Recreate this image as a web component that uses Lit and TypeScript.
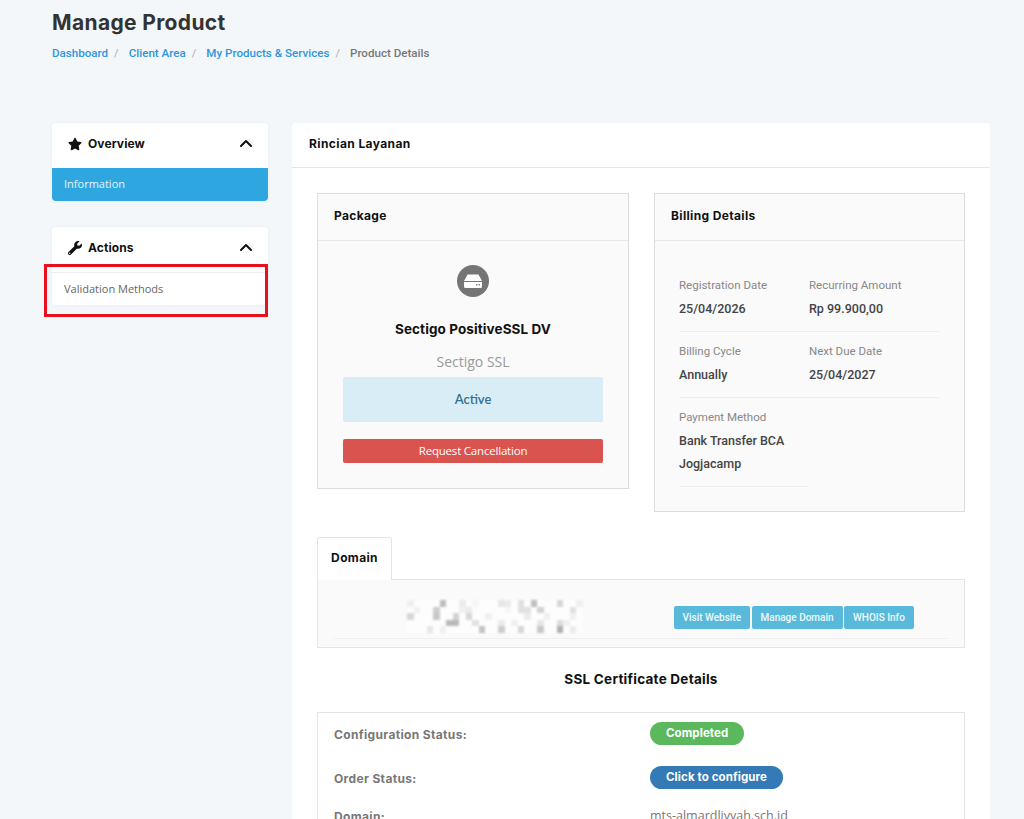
import { LitElement, html, css, svg } from 'lit';
import { customElement } from 'lit/decorators.js';

// blurred-out domain name: [row, col, gray] on a 27x5 tile grid
const MOSAIC: number[][] = [
  [0, 0, 240], [0, 5, 190], [0, 8, 235], [0, 10, 245], [0, 14, 230], [0, 15, 235], [0, 17, 225], [0, 19, 190], [0, 23, 215], [0, 26, 240],
  [1, 1, 240], [1, 4, 205], [1, 8, 240], [1, 9, 235], [1, 15, 245], [1, 17, 225], [1, 18, 225], [1, 20, 210], [1, 25, 225],
  [2, 0, 215], [2, 4, 200], [2, 7, 210], [2, 9, 215], [2, 12, 240], [2, 18, 235], [2, 21, 240], [2, 25, 240],
  [3, 6, 185], [3, 7, 185], [3, 10, 225], [3, 14, 235], [3, 16, 240], [3, 20, 230], [3, 23, 220], [3, 24, 240],
  [4, 3, 230], [4, 5, 240], [4, 11, 195], [4, 14, 205], [4, 17, 215], [4, 20, 200], [4, 23, 175], [4, 25, 235],
];

const chevron = svg`<polyline points="3,8 8,3 13,8" fill="none" stroke="#111" stroke-width="2" stroke-linecap="round" stroke-linejoin="round" />`;

@customElement('app-root')
export class AppRoot extends LitElement {
  static styles = css`
    :host {
      display: block;
      height: 819px;
      overflow: hidden;
      background: #f4f7fa;
      font-family: 'Roboto', sans-serif;
      color: #333;
    }

    .page {
      padding: 10px 34px 0 52px;
    }

    h1 {
      margin: 0;
      height: 26px;
      font: 700 21px/26px 'Inter', sans-serif;
      color: #333;
      letter-spacing: 0.35px;
    }

    .crumbs {
      display: flex;
      margin-top: 8.5px;
      height: 16px;
      font: 500 11.6px/16px 'Roboto', sans-serif;
      color: #777;
    }

    .crumbs a {
      color: #2f96dc;
    }

    .crumbs i {
      font-style: normal;
      color: #bbb;
      width: 20.6px;
      padding-left: 6px;
      box-sizing: border-box;
    }

    .cols {
      display: grid;
      grid-template-columns: 216px 698px;
      gap: 24px;
      margin-top: 62.5px;
    }

    .side {
      display: flex;
      flex-direction: column;
      gap: 26px;
    }

    .side-panel {
      position: relative;
      background: #fff;
      border-radius: 4px;
      box-shadow: 0 0 4px rgba(0, 0, 0, 0.04);
    }

    .side-head {
      display: flex;
      align-items: center;
      height: 42px;
      padding: 0 16px 3px;
      font: 700 12px/1 'Inter', sans-serif;
      color: #111;
    }

    .side-head svg.ico {
      width: 14px;
      height: 14px;
      margin-right: 6px;
      fill: #111;
    }

    .side-head span {
      flex: 1;
      letter-spacing: 0.1px;
    }

    .side-head svg.chev {
      width: 14px;
      height: 12px;
    }

    .side-item {
      height: 33px;
      padding-left: 12px;
      font: 400 11px/32px 'Open Sans', sans-serif;
      border-radius: 0 0 4px 4px;
    }

    .side-item.active {
      background: #2ea7e0;
      color: #e6f5fc;
    }

    .side-item.plain {
      color: #666;
      border-top: 1px solid #eee;
      height: 32px;
      line-height: 31px;
    }

    .marker {
      position: absolute;
      left: -8px;
      top: 37px;
      width: 224px;
      height: 53px;
      box-sizing: border-box;
      border: 3px solid #e8101c;
      pointer-events: none;
    }

    .main {
      background: #fff;
      border-radius: 4px 4px 0 0;
      height: 720px;
    }

    .main-head {
      height: 44px;
      padding-left: 17px;
      font: 700 12px/42px 'Inter', sans-serif;
      letter-spacing: 0.4px;
      color: #111;
      border-bottom: 1px solid #e6e6e6;
    }

    .main-body {
      padding: 25px 25px 0;
    }

    .boxes {
      display: grid;
      grid-template-columns: 312px 311px;
      gap: 25px;
      align-items: start;
    }

    .box {
      background: #fafafa;
      border: 1px solid #ddd;
      box-sizing: border-box;
    }

    .box-head {
      height: 46px;
      padding-left: 16px;
      font: 700 12px/44px 'Inter', sans-serif;
      letter-spacing: 0.35px;
      color: #111;
      border-bottom: 1px solid #e8e8e8;
    }

    .package {
      height: 296px;
      text-align: center;
    }

    .package .box-head {
      text-align: left;
    }

    .package .body {
      padding: 24px 25px 0;
    }

    .disc {
      display: block;
      margin: 0 auto;
      width: 32px;
      height: 32px;
    }

    .product {
      margin-top: 24px;
      font: 700 13.5px/17px 'Inter', sans-serif;
      letter-spacing: 0.1px;
      color: #111;
    }

    .group {
      margin-top: 15px;
      font: 400 14px/18px 'Open Sans', sans-serif;
      color: #999;
    }

    .status {
      margin-top: 6px;
      height: 45px;
      background: #d9edf7;
      border-radius: 2px;
      font: 600 13px/45px 'Lato', sans-serif;
      color: #31708f;
    }

    .cancel {
      margin-top: 17px;
      height: 24px;
      background: #d9534f;
      border-radius: 2px;
      font: 400 11.5px/24px 'Open Sans', sans-serif;
      letter-spacing: -0.2px;
      color: #fff;
    }

    .billing {
      height: 319px;
    }

    .billing .body {
      padding: 35px 24px 0;
    }

    .info {
      display: grid;
      grid-template-columns: 130px 130px;
    }

    .info div {
      height: 56px;
      margin-bottom: 10px;
      box-sizing: border-box;
      border-bottom: 1px solid #eee;
    }

    .info .tall {
      height: 79px;
    }

    .info small {
      display: block;
      font: 400 11.5px/18px 'Roboto', sans-serif;
      color: #888;
    }

    .info b {
      display: block;
      margin-top: 3px;
      font: 500 12.5px/23px 'Roboto', sans-serif;
      color: #444;
    }

    .tab {
      margin-top: 25px;
      width: 75px;
      height: 43px;
      box-sizing: border-box;
      margin-bottom: -1px;
      position: relative;
      background: #fff;
      border: 1px solid #e4e4e4;
      border-bottom: none;
      border-radius: 3px 3px 0 0;
      font: 700 12px/40px 'Inter', sans-serif;
      letter-spacing: 0.35px;
      color: #111;
      text-align: center;
    }

    .pane {
      height: 69px;
      box-sizing: border-box;
      padding: 0 16px;
      background: #fafafa;
      border: 1px solid #e4e4e4;
    }

    .pane-row {
      display: flex;
      align-items: flex-start;
      height: 58px;
      border-bottom: 1px solid #f0f0f0;
    }

    .mosaic {
      display: grid;
      grid-template-columns: repeat(27, 6.5px);
      grid-template-rows: repeat(5, 6.5px);
      margin: 20px 0 0 73px;
      background: #fdfdfd;
      filter: blur(0.8px);
    }

    .btns {
      display: flex;
      gap: 1.5px;
      margin: 26px 0 0 91px;
    }

    .btns span {
      height: 23px;
      padding: 0 9px;
      background: #58b9da;
      border-radius: 2px;
      font: 500 10px/23px 'Roboto', sans-serif;
      color: #eef9fc;
    }

    h2 {
      margin: 21px 0 0;
      height: 20px;
      font: 700 13.5px/20px 'Inter', sans-serif;
      letter-spacing: 0.25px;
      color: #111;
      text-align: center;
    }

    .ssl {
      margin-top: 23px;
      padding: 9px 16px 0;
      border: 1px solid #e4e4e4;
      display: grid;
      grid-template-columns: 316px 1fr;
      grid-template-rows: 44px 38px 40px;
    }

    .ssl .label {
      font: 700 12px/25px 'Inter', sans-serif;
      letter-spacing: 0.35px;
      color: #777;
    }

    .pill {
      display: block;
      width: fit-content;
      height: 23px;
      padding: 0 16px;
      border-radius: 12px;
      font: 700 11.5px/22px 'Inter', sans-serif;
      letter-spacing: 0.1px;
      color: #fff;
    }

    .pill.green {
      background: #5cb85c;
    }

    .pill.blue {
      background: #337ab7;
    }

    .ssl .val {
      font: 400 12.5px/24px 'Open Sans', sans-serif;
      color: #777;
    }
  `;

  render() {
    return html`
      <div class="page">
        <h1>Manage Product</h1>
        <div class="crumbs">
          <a>Dashboard</a><i>/</i><a>Client Area</a><i>/</i><a>My Products &amp; Services</a><i>/</i><span>Product Details</span>
        </div>
        <div class="cols">
          <div class="side">
            <div class="side-panel">
              <div class="side-head">
                <svg class="ico" viewBox="0 0 576 512"><path d="M259.3 17.8L194 150.2 47.9 171.5c-26.2 3.8-36.7 36.1-17.7 54.6l105.7 103-25 145.5c-4.5 26.3 23.2 46 46.4 33.7L288 439.6l130.7 68.7c23.2 12.2 50.9-7.4 46.4-33.7l-25-145.5 105.7-103c19-18.5 8.5-50.8-17.7-54.6L382 150.2 316.7 17.8c-11.7-23.6-45.6-23.9-57.4 0z" /></svg>
                <span>Overview</span>
                <svg class="chev" viewBox="0 0 14 12">${chevron}</svg>
              </div>
              <div class="side-item active">Information</div>
            </div>
            <div class="side-panel">
              <div class="side-head">
                <svg class="ico" viewBox="0 0 512 512"><path d="M507.73 109.1c-2.24-9.03-13.54-12.09-20.12-5.51l-74.36 74.36-67.88-11.31-11.31-67.88 74.36-74.36c6.62-6.62 3.43-17.9-5.66-20.16-47.38-11.74-99.55.91-136.58 37.93-39.64 39.64-50.55 97.1-34.05 147.2L18.74 402.76c-24.99 24.99-24.99 65.51 0 90.5 24.99 24.99 65.51 24.99 90.5 0l213.21-213.21c50.12 16.71 107.47 5.68 147.37-34.22 37.07-37.07 49.7-89.32 37.91-136.73zM64 472c-13.25 0-24-10.75-24-24 0-13.26 10.75-24 24-24s24 10.74 24 24c0 13.25-10.75 24-24 24z" /></svg>
                <span>Actions</span>
                <svg class="chev" viewBox="0 0 14 12">${chevron}</svg>
              </div>
              <div class="side-item plain">Validation Methods</div>
              <div class="marker"></div>
            </div>
          </div>
          <div class="main">
            <div class="main-head">Rincian Layanan</div>
            <div class="main-body">
              <div class="boxes">
                <div class="box package">
                  <div class="box-head">Package</div>
                  <div class="body">
                    <svg class="disc" viewBox="0 0 32 32">
                      <circle cx="16" cy="16" r="16" fill="#757575" />
                      <path d="M10.5 9.5h11l3.5 6.5v5.5a1.5 1.5 0 0 1-1.5 1.5h-15A1.5 1.5 0 0 1 7 21.500V16z" fill="#fff" />
                      <path d="M7 16.500h18" stroke="#757575" stroke-width="1" />
                      <rect x="19" y="19" width="1.500" height="1.500" fill="#888" />
                      <rect x="21.500" y="19" width="1.500" height="1.500" fill="#888" />
                    </svg>
                    <div class="product">Sectigo PositiveSSL DV</div>
                    <div class="group">Sectigo SSL</div>
                    <div class="status">Active</div>
                    <div class="cancel">Request Cancellation</div>
                  </div>
                </div>
                <div class="box billing">
                  <div class="box-head">Billing Details</div>
                  <div class="body">
                    <div class="info">
                      <div><small>Registration Date</small><b>25/04/2026</b></div>
                      <div><small>Recurring Amount</small><b>Rp 99.900,00</b></div>
                      <div><small>Billing Cycle</small><b>Annually</b></div>
                      <div><small>Next Due Date</small><b>25/04/2027</b></div>
                      <div class="tall"><small>Payment Method</small><b>Bank Transfer BCA<br />Jogjacamp</b></div>
                    </div>
                  </div>
                </div>
              </div>
              <div class="tab">Domain</div>
              <div class="pane">
                <div class="pane-row">
                  <div class="mosaic">
                    ${MOSAIC.map(
                      ([r, c, g]) => html`<i style="grid-row:${r + 1};grid-column:${c + 1};background:rgb(${g},${g},${g})"></i>`
                    )}
                  </div>
                  <div class="btns">
                    <span>Visit Website</span><span>Manage Domain</span><span>WHOIS Info</span>
                  </div>
                </div>
              </div>
              <h2>SSL Certificate Details</h2>
              <div class="ssl">
                <div class="label">Configuration Status:</div>
                <div><span class="pill green">Completed</span></div>
                <div class="label">Order Status:</div>
                <div><span class="pill blue">Click to configure</span></div>
                <div class="label">Domain:</div>
                <div class="val">mts-almardliyyah.sch.id</div>
              </div>
            </div>
          </div>
        </div>
      </div>
    `;
  }
}
